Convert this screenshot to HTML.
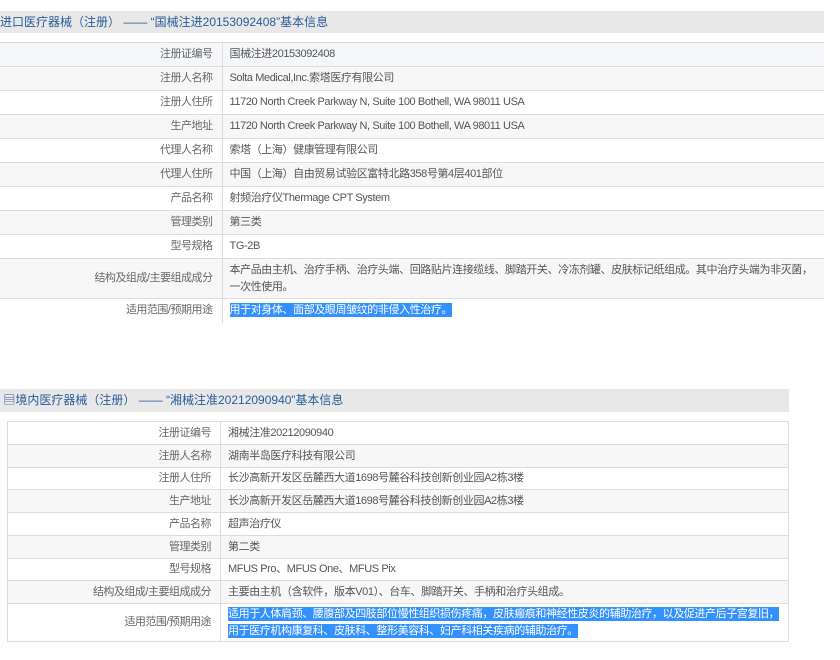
<!DOCTYPE html>
<html><head><meta charset="utf-8"><style>
body{margin:0;background:#fff;width:840px;height:660px;overflow:hidden;font-family:"Liberation Sans","Noto Sans CJK SC",sans-serif;font-size:11px;letter-spacing:-0.4px;color:#555;position:relative}
.hd{position:absolute;background:#e8e8e8;color:#2a5a9a;font-size:12px;letter-spacing:0;line-height:22px;white-space:nowrap}
table{position:absolute;border-collapse:collapse;table-layout:fixed}
td{border-top:1px solid #dcdcdc;border-bottom:1px solid #dcdcdc;padding:0 7px;line-height:17px;vertical-align:middle;color:#555}
td.l{text-align:right;color:#666;border-right:1px solid #dcdcdc;padding-right:9px;letter-spacing:-0.5px}
tr:nth-child(even) td{background:#f7f7f7}
.sel{background:#3390ff;color:#fff;padding:1px 0}
#t2 td{border-left:1px solid #dcdcdc;border-right:1px solid #dcdcdc}
</style></head><body>
<div class="hd" style="left:0;top:11px;width:824px;height:22px;">进口医疗器械（注册） —— “国械注进20153092408”基本信息</div>
<table style="left:-2px;top:42px;width:826px;">
<colgroup><col style="width:224px"><col></colgroup>
<tr style="height:24px"><td class="l" style="background:#f4f6fa">注册证编号</td><td style="background:#f4f6fa">国械注进20153092408</td></tr>
<tr style="height:24px"><td class="l">注册人名称</td><td>Solta Medical,Inc.索塔医疗有限公司</td></tr>
<tr style="height:24px"><td class="l">注册人住所</td><td>11720 North Creek Parkway N, Suite 100 Bothell, WA 98011 USA</td></tr>
<tr style="height:24px"><td class="l">生产地址</td><td>11720 North Creek Parkway N, Suite 100 Bothell, WA 98011 USA</td></tr>
<tr style="height:24px"><td class="l">代理人名称</td><td>索塔（上海）健康管理有限公司</td></tr>
<tr style="height:24px"><td class="l">代理人住所</td><td>中国（上海）自由贸易试验区富特北路358号第4层401部位</td></tr>
<tr style="height:24px"><td class="l">产品名称</td><td>射频治疗仪Thermage CPT System</td></tr>
<tr style="height:24px"><td class="l">管理类别</td><td>第三类</td></tr>
<tr style="height:24px"><td class="l">型号规格</td><td>TG-2B</td></tr>
<tr style="height:40px"><td class="l">结构及组成/主要组成成分</td><td>本产品由主机、治疗手柄、治疗头端、回路贴片连接缆线、脚踏开关、冷冻剂罐、皮肤标记纸组成。其中治疗头端为非灭菌，一次性使用。</td></tr>
<tr style="height:24px"><td class="l" style="border-bottom:none">适用范围/预期用途</td><td style="border-bottom:none"><span class="sel">用于对身体、面部及眼周皱纹的非侵入性治疗。</span></td></tr>
</table>
<div class="hd" style="left:0;top:389px;width:789px;height:23px;line-height:23px;">&nbsp;▤境内医疗器械（注册） —— “湘械注准20212090940”基本信息</div>
<table id="t2" style="left:7px;top:421px;width:782px;">
<colgroup><col style="width:213px"><col></colgroup>
<tr style="height:23px"><td class="l">注册证编号</td><td>湘械注准20212090940</td></tr>
<tr style="height:23px"><td class="l">注册人名称</td><td>湖南半岛医疗科技有限公司</td></tr>
<tr style="height:22px"><td class="l">注册人住所</td><td>长沙高新开发区岳麓西大道1698号麓谷科技创新创业园A2栋3楼</td></tr>
<tr style="height:23px"><td class="l">生产地址</td><td>长沙高新开发区岳麓西大道1698号麓谷科技创新创业园A2栋3楼</td></tr>
<tr style="height:23px"><td class="l">产品名称</td><td>超声治疗仪</td></tr>
<tr style="height:23px"><td class="l">管理类别</td><td>第二类</td></tr>
<tr style="height:22px"><td class="l">型号规格</td><td>MFUS Pro、MFUS One、MFUS Pix</td></tr>
<tr style="height:23px"><td class="l">结构及组成/主要组成成分</td><td>主要由主机（含软件，版本V01）、台车、脚踏开关、手柄和治疗头组成。</td></tr>
<tr style="height:38px"><td class="l">适用范围/预期用途</td><td><span class="sel">适用于人体肩颈、腰腹部及四肢部位慢性组织损伤疼痛，皮肤瘢痕和神经性皮炎的辅助治疗，以及促进产后子宫复旧，用于医疗机构康复科、皮肤科、整形美容科、妇产科相关疾病的辅助治疗。</span></td></tr>
</table>
</body></html>
